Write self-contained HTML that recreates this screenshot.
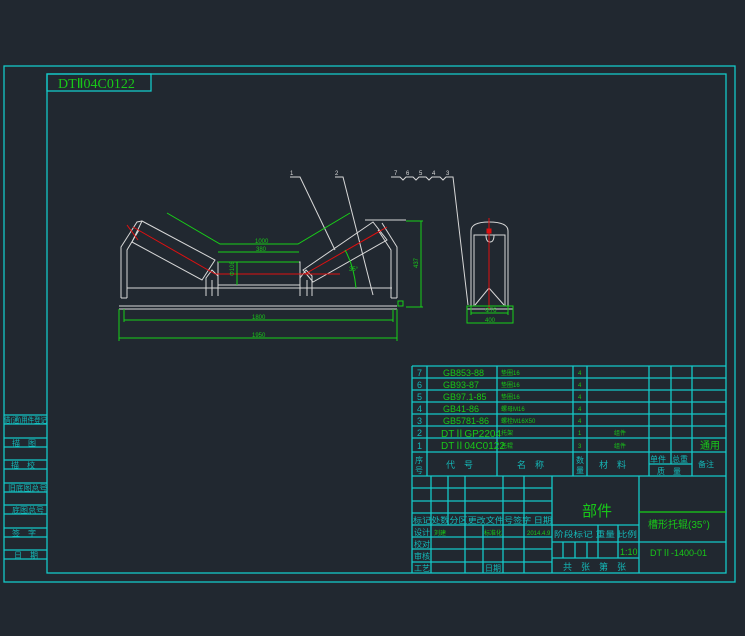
<!DOCTYPE html>
<html><head><meta charset="utf-8"><style>
html,body{margin:0;padding:0;background:#212830;width:745px;height:636px;overflow:hidden}
svg{display:block}
.c{stroke:#14c8c8;fill:none;stroke-width:1.3}
.w{stroke:#d8d8d8;fill:none;stroke-width:1}
.g{stroke:#18d018;fill:none;stroke-width:1}
.r{stroke:#e01010;fill:none;stroke-width:1}
text{font-family:"Liberation Sans","Noto Sans CJK SC",sans-serif}
.tc{fill:#14b8b8;font-size:10px}
.tg{fill:#18c818;font-size:9px}
.tgs{fill:#18c818;font-size:6px}
</style></head><body>
<svg width="745" height="636" viewBox="0 0 745 636">
<!-- frames -->
<rect x="4" y="66" width="731" height="516" class="c"/>
<rect x="47" y="74" width="679" height="499" class="c"/>
<rect x="47" y="74" width="104" height="17" class="c"/>
<text x="58" y="88" style="fill:#18c818;font-size:14px;font-family:'Liberation Serif',serif">DTⅡ04C0122</text>
<!-- left column -->
<g class="c">
<line x1="4" y1="415" x2="47" y2="415"/><line x1="4" y1="424" x2="47" y2="424"/>
<line x1="4" y1="438" x2="47" y2="438"/><line x1="4" y1="447" x2="47" y2="447"/>
<line x1="4" y1="460" x2="47" y2="460"/><line x1="4" y1="469" x2="47" y2="469"/>
<line x1="4" y1="483" x2="47" y2="483"/><line x1="4" y1="492" x2="47" y2="492"/>
<line x1="4" y1="505" x2="47" y2="505"/><line x1="4" y1="514" x2="47" y2="514"/>
<line x1="4" y1="528" x2="47" y2="528"/><line x1="4" y1="537" x2="47" y2="537"/>
<line x1="4" y1="550" x2="47" y2="550"/><line x1="4" y1="559" x2="47" y2="559"/>
</g>
<g class="tc" style="font-size:8px">
<text x="4" y="423" textLength="43" lengthAdjust="spacingAndGlyphs">借(通)用件登记</text>
<text x="12" y="446">描　图</text>
<text x="11" y="468">描　校</text>
<text x="8" y="491" textLength="39" lengthAdjust="spacingAndGlyphs">旧底图总号</text>
<text x="12" y="513">底图总号</text>
<text x="12" y="536">签　字</text>
<text x="14" y="558">日　期</text>
</g>

<!-- idler front view -->
<g class="w">
<line x1="119" y1="306" x2="397" y2="306"/><line x1="119" y1="309" x2="397" y2="309"/>
<line x1="127" y1="288" x2="392" y2="288"/>
<polyline points="121,298 121,247 137,222 142,221"/>
<polyline points="127,298 127,250 139,230"/>
<line x1="121" y1="298" x2="127" y2="298"/>
<polygon points="142,221 215,260 202,280 132,242"/>
<polyline points="206,296 206,278 212,270 218,276 218,296"/>
<line x1="212" y1="280" x2="212" y2="296"/>
<rect x="218" y="262" width="82" height="23"/>
<polyline points="300,296 300,278 306,270 312,276 312,296"/>
<line x1="307" y1="280" x2="307" y2="296"/>
<polygon points="303,270 373,222 387,240 313,282"/>
<polyline points="397,298 397,247 382,223"/>
<polyline points="391,298 391,250 378,230"/>
<line x1="391" y1="298" x2="397" y2="298"/>
<line x1="365" y1="220" x2="406" y2="220"/>
<polyline points="290,177 300,177 335,250"/>
<polyline points="335,177 343,177 373,295"/>
<polyline points="391,177 400,177 403,180 406,177 413,177 416,180 419,177 426,177 429,180 432,177 440,177 443,180 446,177 453,177 468,305"/>
</g>
<g class="tg" style="font-size:6px;fill:#d8d8d8">
<text x="290" y="175">1</text><text x="335" y="175">2</text>
<text x="394" y="175">7</text><text x="406" y="175">6</text><text x="419" y="175">5</text><text x="432" y="175">4</text><text x="446" y="175">3</text>
</g>
<g class="r">
<line x1="133" y1="227" x2="215" y2="274"/>
<line x1="215" y1="274" x2="340" y2="274"/>
<line x1="305" y1="274" x2="387" y2="227"/>
<line x1="127" y1="225" x2="138" y2="240"/>
</g>
<g class="g">
<polyline points="167,213 220,244 298,244 350,213"/>
<line x1="218" y1="252" x2="299" y2="252"/>
<line x1="218" y1="262" x2="299" y2="262"/>
<line x1="237" y1="262" x2="237" y2="285"/>
<path d="M345,250 Q354,266 356,288"/>
<line x1="406" y1="221" x2="423" y2="221"/><line x1="406" y1="307" x2="423" y2="307"/>
<line x1="421" y1="221" x2="421" y2="307"/>
<line x1="124" y1="309" x2="124" y2="322"/><line x1="393" y1="309" x2="393" y2="322"/>
<line x1="124" y1="320" x2="393" y2="320"/>
<line x1="119" y1="309" x2="119" y2="341"/><line x1="397" y1="309" x2="397" y2="341"/>
<line x1="119" y1="338" x2="397" y2="338"/>
<rect x="398" y="301" width="5" height="5"/>
</g>
<g class="tgs">
<text x="255" y="243">1000</text><text x="256" y="251">380</text>
<text x="234" y="276" transform="rotate(-90 234 276)">Φ108</text>
<text x="252" y="319">1800</text><text x="252" y="337">1950</text>
<text x="418" y="268" transform="rotate(-90 418 268)">437</text>
<text x="349" y="271">35°</text>
</g>
<!-- side view -->
<g class="w">
<path d="M471,306 L471,231 Q471,222 489,222 Q508,222 508,231 L508,306"/>
<path d="M474,306 L474,235 L505,235 L505,306"/>
<path d="M486,235 Q486,242 490,242 Q494,242 494,235"/>
<polyline points="475,305 489,288 504,305"/>
<line x1="467" y1="306" x2="513" y2="306"/><line x1="467" y1="309" x2="513" y2="309"/>
</g>
<line x1="489" y1="218" x2="489" y2="309" class="r"/>
<rect x="487" y="229" width="4" height="4" class="r" style="fill:#e01010"/>
<g class="g">
<rect x="467" y="306" width="46" height="17"/>
<line x1="471" y1="313" x2="508" y2="313"/>
<line x1="471" y1="306" x2="471" y2="315"/><line x1="508" y1="306" x2="508" y2="315"/>
</g>
<g class="tgs"><text x="485" y="312">Φ76</text><text x="485" y="322">400</text></g>

<!-- BOM table -->
<g class="c">
<line x1="412" y1="366" x2="726" y2="366"/>
<line x1="412" y1="378" x2="726" y2="378"/>
<line x1="412" y1="390" x2="726" y2="390"/>
<line x1="412" y1="402" x2="726" y2="402"/>
<line x1="412" y1="414" x2="726" y2="414"/>
<line x1="412" y1="426" x2="726" y2="426"/>
<line x1="412" y1="438" x2="726" y2="438"/>
<line x1="412" y1="452" x2="726" y2="452"/>
<line x1="649" y1="464" x2="692" y2="464"/>
<line x1="412" y1="476" x2="726" y2="476"/>
<line x1="412" y1="366" x2="412" y2="573"/>
<line x1="427" y1="366" x2="427" y2="476"/>
<line x1="497" y1="366" x2="497" y2="476"/>
<line x1="573" y1="366" x2="573" y2="476"/>
<line x1="587" y1="366" x2="587" y2="476"/>
<line x1="649" y1="366" x2="649" y2="476"/>
<line x1="671" y1="366" x2="671" y2="464"/>
<line x1="692" y1="366" x2="692" y2="476"/>
<!-- lower -->
<line x1="412" y1="488" x2="552" y2="488"/>
<line x1="412" y1="501" x2="552" y2="501"/>
<line x1="412" y1="513" x2="552" y2="513"/>
<line x1="412" y1="525" x2="639" y2="525"/>
<line x1="412" y1="537" x2="552" y2="537"/>
<line x1="412" y1="549" x2="552" y2="549"/>
<line x1="412" y1="562" x2="552" y2="562"/>
<line x1="552" y1="542" x2="726" y2="542"/>
<line x1="552" y1="558" x2="639" y2="558"/>
<line x1="431" y1="476" x2="431" y2="573"/>
<line x1="448" y1="476" x2="448" y2="525"/>
<line x1="465" y1="476" x2="465" y2="573"/>
<line x1="483" y1="525" x2="483" y2="573"/>
<line x1="503" y1="476" x2="503" y2="573"/>
<line x1="524" y1="476" x2="524" y2="573"/>
<line x1="552" y1="476" x2="552" y2="573"/>
<line x1="563" y1="542" x2="563" y2="558"/>
<line x1="575" y1="542" x2="575" y2="558"/>
<line x1="587" y1="542" x2="587" y2="558"/>
<line x1="598" y1="525" x2="598" y2="558"/>
<line x1="618" y1="525" x2="618" y2="558"/>
<line x1="639" y1="476" x2="639" y2="573"/>
</g>
<line x1="639" y1="512" x2="726" y2="512" stroke="#18d018" stroke-width="1.2"/>
<g class="tc" style="font-size:9px">
<text x="417" y="376">7</text><text x="417" y="388">6</text><text x="417" y="400">5</text><text x="417" y="412">4</text><text x="417" y="424">3</text><text x="417" y="436">2</text><text x="417" y="449">1</text>
<text x="415" y="463" style="font-size:8px">序</text><text x="415" y="473" style="font-size:8px">号</text>
<text x="446" y="468">代　号</text><text x="517" y="468">名　称</text>
<text x="576" y="463" style="font-size:8px">数</text><text x="576" y="473" style="font-size:8px">量</text>
<text x="599" y="468">材　料</text>
<text x="650" y="462" style="font-size:8px">单件</text><text x="672" y="462" style="font-size:8px">总重</text>
<text x="657" y="474" style="font-size:8px">质　量</text><text x="698" y="467" style="font-size:8px">备注</text>
<text x="413" y="523" style="font-size:8px" textLength="139" lengthAdjust="spacingAndGlyphs">标记处数分区更改文件号签字 日期</text>
<text x="414" y="535" style="font-size:8px">设计</text>
<text x="414" y="547" style="font-size:8px">校对</text>
<text x="414" y="559" style="font-size:8px">审核</text>
<text x="414" y="571" style="font-size:8px">工艺</text>
<text x="485" y="571" style="font-size:8px">日期</text>
<text x="554" y="537" style="font-size:8px" textLength="83" lengthAdjust="spacingAndGlyphs">阶段标记 重量 比例</text>
<text x="563" y="570" style="font-size:9px">共　张　第　张</text>
</g>
<text x="582" y="516" style="fill:#18c818;font-size:15px;font-family:'Liberation Sans','Noto Sans CJK SC',sans-serif">部件</text>
<g class="tg">
<text x="443" y="376">GB853-88</text><text x="443" y="388">GB93-87</text><text x="443" y="400">GB97.1-85</text>
<text x="443" y="412">GB41-86</text><text x="443" y="424">GB5781-86</text>
<text x="441" y="437" style="font-size:10px">DTⅡGP2204</text>
<text x="441" y="449" style="font-size:10px">DTⅡ04C0122</text>
<text x="700" y="449" style="font-size:10px">通用</text>
<text x="620" y="555" style="font-size:9px">1:10</text>
<text x="648" y="528" style="font-size:10px">槽形托辊(35°)</text>
<text x="650" y="556" style="font-size:9px">DTⅡ-1400-01</text>
</g>
<g class="tgs" style="font-size:6px">
<text x="501" y="375">垫圈16</text><text x="501" y="387">垫圈16</text><text x="501" y="399">垫圈16</text>
<text x="501" y="411">螺母M16</text><text x="501" y="423">螺栓M16X50</text><text x="501" y="435">托架</text><text x="501" y="448">托辊</text>
<text x="578" y="375">4</text><text x="578" y="387">4</text><text x="578" y="399">4</text><text x="578" y="411">4</text><text x="578" y="423">4</text><text x="578" y="435">1</text><text x="578" y="448">3</text>
<text x="614" y="435">组件</text><text x="614" y="448">组件</text>
<text x="434" y="535">刘建</text><text x="484" y="535">标准化</text><text x="527" y="535">2014.4.9</text>
</g>
</svg>
</body></html>
